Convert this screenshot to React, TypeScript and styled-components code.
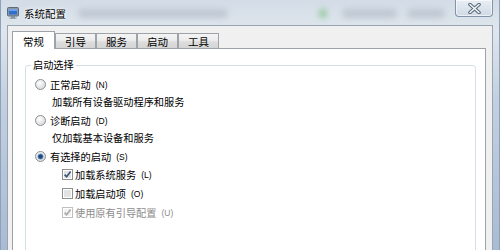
import React from 'react';
import styled, {createGlobalStyle} from 'styled-components';

const GlobalStyle = createGlobalStyle`
    html, body {
        margin: 0;
        padding: 0;
        width: 500px;
        height: 250px;
        overflow: hidden;
    }
    body {
        font-family: "Noto Sans CJK SC", "Microsoft YaHei", sans-serif;
        color: #000;
    }
`;

const Window = styled.div`
    width: 500px;
    height: 250px;
    display: flex;
    flex-direction: column;
    overflow: hidden;
    background: linear-gradient(180deg, #d3dce6 0%, #dfe6ed 12%, #c2d0e0 40%, #a9bbd3 100%);
    box-shadow: inset 1px 0 0 #8fa1b8, inset -1px 0 0 #8fa1b8;
`;

const TitleBar = styled.div`
    height: 25px;
    flex: none;
    display: flex;
    align-items: flex-start;
    padding-left: 7px;
    box-sizing: border-box;
`;

const AppIcon = styled.svg`
    margin-top: 7px;
    flex: none;
`;

const Title = styled.span`
    margin: 7px 0 0 5px;
    font-size: 10.5px;
    line-height: 14px;
    color: #000;
    text-shadow: 0 0 4px #fff, 0 0 2px #fff;
`;

const Haze = styled.span<{$w: number; $ml: number; $c?: string}>`
    flex: none;
    width: ${(p) => p.$w}px;
    height: 9px;
    margin: 9px 0 0 ${(p) => p.$ml}px;
    border-radius: 5px;
    background: ${(p) => p.$c || '#b3bdc8'};
    filter: blur(3px);
    opacity: 0.7;
`;

const CloseButton = styled.div`
    margin-left: auto;
    margin-right: 7px;
    width: 38px;
    height: 17px;
    box-sizing: border-box;
    border: 1px solid #8293aa;
    border-top: none;
    border-radius: 0 0 4px 4px;
    background: linear-gradient(180deg, #e9eef4 0%, #dce4ed 50%, #cfd9e5 100%);
    box-shadow: inset 0 0 0 1px rgba(255, 255, 255, 0.6);
    display: flex;
    align-items: center;
    justify-content: center;
`;

const Client = styled.div`
    flex: 1;
    min-height: 0;
    margin: 0 7px;
    border: 1px solid #99a4b2;
    border-bottom: none;
    background: #f0f0f0;
    padding: 5px 6px 0 4px;
    display: flex;
    flex-direction: column;
`;

const TabRow = styled.div`
    position: relative;
    z-index: 1;
    height: 17px;
    flex: none;
    display: flex;
    align-items: flex-end;
`;

const Tab = styled.div<{$active?: boolean}>`
    box-sizing: border-box;
    width: ${(p) => (p.$active ? 43 : 41)}px;
    height: ${(p) => (p.$active ? 18 : 15)}px;
    margin-bottom: ${(p) => (p.$active ? -1 : 0)}px;
    border: 1px solid #9ea3aa;
    border-bottom: none;
    background: ${(p) => (p.$active
        ? '#fff'
        : 'linear-gradient(180deg, #f4f4f4 0%, #ececec 45%, #dedede 55%, #d4d4d4 100%)')};
    font-size: 10.5px;
    line-height: 14px;
    padding-top: ${(p) => (p.$active ? 3 : 1)}px;
    text-align: center;
    color: #000;
`;

const Panel = styled.div`
    flex: 1;
    min-height: 0;
    background: #fff;
    border: 1px solid #9ea3aa;
    border-bottom: none;
    padding: 9px 9px 0 12px;
    display: flex;
    flex-direction: column;
`;

const GroupBox = styled.fieldset`
    margin: 0;
    padding: 4px 9px 0 5px;
    border: 1px solid #d5dfe5;
    border-radius: 3px;
    min-width: 0;
    min-height: 220px;
`;

const Legend = styled.legend`
    padding: 0 2px;
    font-size: 10.2px;
    line-height: 14px;
    color: #000;
`;

const Options = styled.div`
    display: flex;
    flex-direction: column;
    gap: 2px;
    padding-left: 4px;
`;

const Option = styled.div`
    display: flex;
    flex-direction: column;
`;

const Row = styled.div<{$indent?: number; $h?: number; $disabled?: boolean}>`
    display: flex;
    align-items: center;
    gap: 3px;
    height: ${(p) => p.$h || 17}px;
    padding-left: ${(p) => p.$indent || 0}px;
    font-size: 10.2px;
    color: ${(p) => (p.$disabled ? '#8c8c8c' : '#000')};
    white-space: nowrap;
`;

const Desc = styled.div`
    height: 17px;
    line-height: 17px;
    padding-left: 17px;
    font-size: 10.2px;
    white-space: nowrap;
`;

const Key = styled.span`
    font-family: "Liberation Sans", Arial, sans-serif;
    font-size: 8.5px;
    margin-left: 2px;
`;

const Radio = ({checked}: {checked?: boolean}) => (
    <svg width='11' height='11' viewBox='0 0 11 11' style={{flex: 'none', marginRight: 1}}>
        <defs>
            <radialGradient id='rg' cx='0.4' cy='0.35' r='0.7'>
                <stop offset='0' stopColor='#ffffff'/>
                <stop offset='1' stopColor='#d4d6d8'/>
            </radialGradient>
        </defs>
        <circle cx='5.5' cy='5.5' r='5' fill='url(#rg)' stroke='#8e9093' strokeWidth='1'/>
        {checked && <circle cx='5.5' cy='5.5' r='2.6' fill='#24497a' stroke='#5c8fcf' strokeWidth='0.8'/>}
    </svg>
);

const Check = ({checked, disabled}: {checked?: boolean; disabled?: boolean}) => (
    <svg width='11' height='11' viewBox='0 0 11 11' style={{flex: 'none', marginRight: -1}}>
        <rect x='0.5' y='0.5' width='10' height='10' fill='#fff' stroke={disabled ? '#c0c0c0' : '#8e8f8f'}/>
        <rect x='2' y='2' width='7' height='7' fill={disabled ? '#f2f2f2' : '#e2e3e4'}/>
        {checked && (
            <path
                d='M2.6 5.6 L4.6 7.8 L8.6 2.6'
                fill='none'
                stroke={disabled ? '#a9a9a9' : '#3d5577'}
                strokeWidth='1.6'
            />
        )}
    </svg>
);

export default function App() {
    return (
        <Window>
            <GlobalStyle/>
            <TitleBar>
                <AppIcon width='12' height='12' viewBox='0 0 12 12'>
                    <rect x='0.5' y='0.5' width='11' height='8.5' rx='1' fill='#8c98a6' stroke='#5d6a79'/>
                    <rect x='2' y='2' width='8' height='5.5' fill='#2f6fd0'/>
                    <rect x='2' y='2' width='8' height='2' fill='#6fa2ea'/>
                    <rect x='4' y='9.5' width='4' height='1.2' fill='#6d7886'/>
                    <rect x='2.5' y='10.7' width='7' height='1' fill='#7f8a97'/>
                </AppIcon>
                <Title>系统配置</Title>
                <Haze $w={150} $ml={12}/>
                <Haze $w={6} $ml={92} $c='#5fb65f'/>
                <Haze $w={55} $ml={16}/>
                <Haze $w={38} $ml={10}/>
                <CloseButton>
                    <svg width='13' height='11' viewBox='0 0 13 11'>
                        <path d='M2 1.5 L11 9.5 M11 1.5 L2 9.5' stroke='#56667a' strokeWidth='3.6' strokeLinecap='round'/>
                        <path d='M2 1.5 L11 9.5 M11 1.5 L2 9.5' stroke='#f4f6f8' strokeWidth='1.6' strokeLinecap='round'/>
                    </svg>
                </CloseButton>
            </TitleBar>
            <Client>
                <TabRow>
                    <Tab $active>常规</Tab>
                    <Tab>引导</Tab>
                    <Tab>服务</Tab>
                    <Tab>启动</Tab>
                    <Tab>工具</Tab>
                </TabRow>
                <Panel>
                    <GroupBox>
                        <Legend>启动选择</Legend>
                        <Options>
                            <Option>
                                <Row><Radio/>正常启动<Key>(N)</Key></Row>
                                <Desc>加载所有设备驱动程序和服务</Desc>
                            </Option>
                            <Option>
                                <Row><Radio/>诊断启动<Key>(D)</Key></Row>
                                <Desc>仅加载基本设备和服务</Desc>
                            </Option>
                            <Option>
                                <Row><Radio checked/>有选择的启动<Key>(S)</Key></Row>
                                <Row $indent={27} $h={19}><Check checked/>加载系统服务<Key>(L)</Key></Row>
                                <Row $indent={27} $h={19}><Check/>加载启动项<Key>(O)</Key></Row>
                                <Row $indent={27} $h={19} $disabled><Check checked disabled/>使用原有引导配置<Key>(U)</Key></Row>
                            </Option>
                        </Options>
                    </GroupBox>
                </Panel>
            </Client>
        </Window>
    );
}
